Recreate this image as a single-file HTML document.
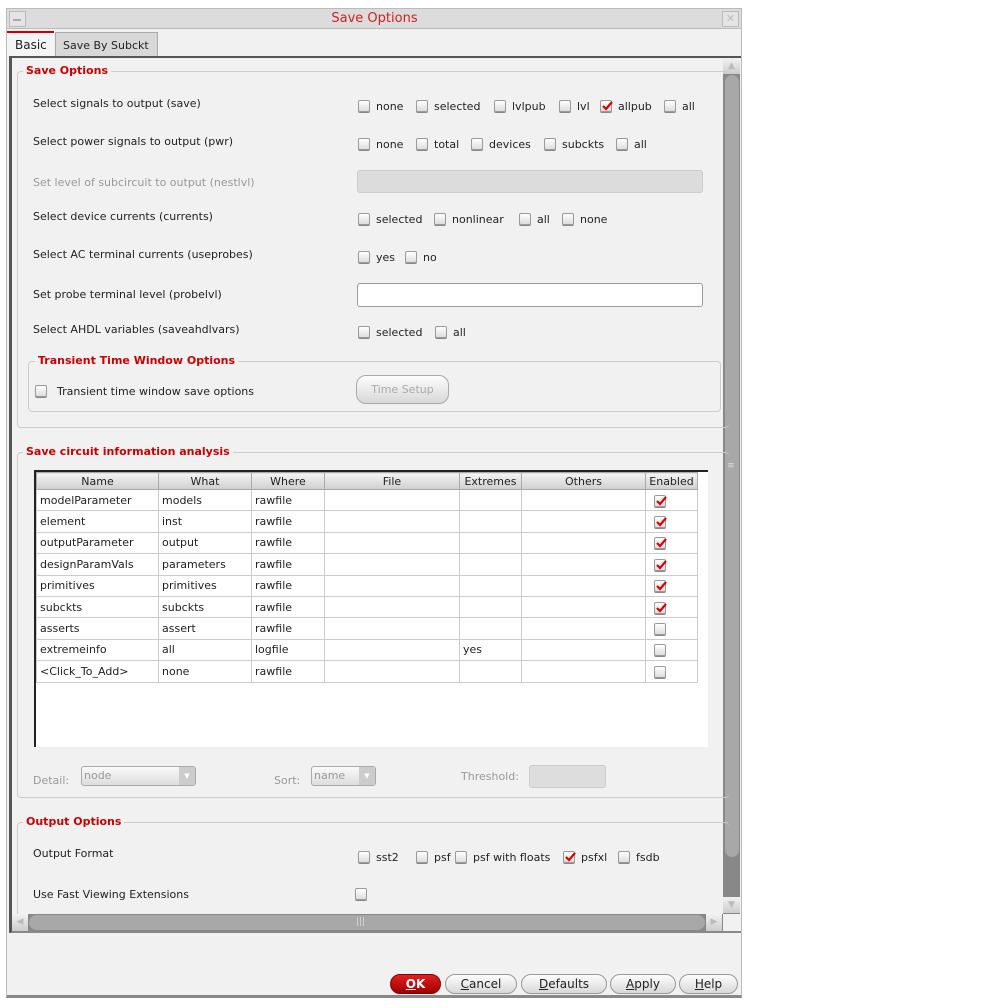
<!DOCTYPE html>
<html><head><meta charset="utf-8"><style>
*{margin:0;padding:0;box-sizing:border-box}
body{width:993px;height:1008px;background:#fff;position:relative;overflow:hidden;font-family:"DejaVu Sans","Liberation Sans",sans-serif;font-size:11px;color:#222}
.a{position:absolute}
.t{position:absolute;white-space:nowrap;line-height:13px}
.cb{position:absolute;width:12px;height:12px;border:1px solid #9a9a9a;border-radius:2px;background:linear-gradient(#fff,#ddd);box-shadow:0 1px 0 #888}
.cb svg{position:absolute;left:0;top:-1px}
.grp{position:absolute;border:1px solid #ccc;border-radius:4px}
.gt{position:absolute;background:#f1f1f1;padding:0 3px;color:#cc0000;font-weight:bold;line-height:13px}
.btn{position:absolute;height:20px;border:1px solid #999;border-radius:10px;background:linear-gradient(#fdfdfd,#d8d8d8);text-align:center;line-height:18px;font-size:12px;color:#222}
table{border-collapse:collapse;font-size:11px;table-layout:fixed}
td{border:1px solid #ccc;height:21.4px;padding:0 3px;white-space:nowrap;color:#222;overflow:hidden}
th{font-weight:normal;height:17px;border:1px solid #aaa;background:linear-gradient(#f4f4f4,#cfcfcf);color:#222}
td.en{padding-left:8px}
.dis{color:#999}
</style></head><body>
<div class="a" style="left:6px;top:8px;width:736px;height:990px;background:#f1f1f1;border:1px solid #bbb;border-bottom:3px solid #888"></div>
<div class="a" style="left:7px;top:9px;width:734px;height:20px;background:#dcdcdc;border-bottom:1px solid #bbb"></div>
<div class="a" style="left:9px;top:11px;width:17px;height:16px;border:1px solid #bbb;background:#e4e4e4"></div>
<div class="a" style="left:13px;top:19px;width:8px;height:2px;background:#aaa"></div>
<div class="a" style="left:722px;top:11px;width:17px;height:16px;border:1px solid #bbb;background:#e4e4e4;color:#bbb;font-size:11px;text-align:center;line-height:14px">✕</div>
<div class="t" style="left:0;width:749px;text-align:center;top:12px;color:#cc2222;font-size:13px">Save Options</div>
<div class="a" style="left:7px;top:31px;width:47px;height:26px;background:#f4f4f4;border-top:2px solid #cc0000"></div>
<div class="t" style="left:15px;top:39px;font-size:12px">Basic</div>
<div class="a" style="left:55px;top:32px;width:103px;height:24px;background:#d8d8d8;border:1px solid #aaa;border-bottom:none"></div>
<div class="t" style="left:63px;top:39px;font-size:11px">Save By Subckt</div>
<div class="a" style="left:9px;top:56px;width:732px;height:877px;border-top:2px solid #555;border-left:3px solid #555;border-bottom:1px solid #888"></div>
<div class="a" style="left:723px;top:58px;width:17px;height:856px;background:#888"></div>
<div class="a" style="left:723px;top:58px;width:17px;height:16px;background:linear-gradient(#f2f2f2,#ccc);color:#bbb;font-size:9px;text-align:center;line-height:16px">▲</div>
<div class="a" style="left:725px;top:75px;width:14px;height:782px;border-radius:7px;background:#a8a8a8"></div>
<div class="t" style="left:727px;top:460px;color:#ddd;font-size:9px">≡</div>
<div class="a" style="left:723px;top:897px;width:17px;height:16px;background:linear-gradient(#f2f2f2,#ccc);color:#bbb;font-size:9px;text-align:center;line-height:16px">▼</div>

<div class="grp" style="left:17px;top:71px;width:712px;height:357px;border-right:none"></div>
<div class="gt" style="left:23px;top:64px">Save Options</div>
<div class="t" style="left:33px;top:97px">Select signals to output (save)</div>
<div class="t" style="left:33px;top:135px">Select power signals to output (pwr)</div>
<div class="t dis" style="left:33px;top:176px">Set level of subcircuit to output (nestlvl)</div>
<div class="t" style="left:33px;top:210px">Select device currents (currents)</div>
<div class="t" style="left:33px;top:248px">Select AC terminal currents (useprobes)</div>
<div class="t" style="left:33px;top:288px">Set probe terminal level (probelvl)</div>
<div class="t" style="left:33px;top:323px">Select AHDL variables (saveahdlvars)</div>

<div class="cb" style="left:358px;top:100px"></div><div class="t" style="left:376px;top:100px">none</div>
<div class="cb" style="left:416px;top:100px"></div><div class="t" style="left:434px;top:100px">selected</div>
<div class="cb" style="left:494px;top:100px"></div><div class="t" style="left:512px;top:100px">lvlpub</div>
<div class="cb" style="left:559px;top:100px"></div><div class="t" style="left:577px;top:100px">lvl</div>
<div class="cb" style="left:600px;top:100px"><svg width="13" height="13"><path d="M2 6 L5 9 L11 2" fill="none" stroke="#d00" stroke-width="2.2"/></svg></div><div class="t" style="left:618px;top:100px">allpub</div>
<div class="cb" style="left:664px;top:100px"></div><div class="t" style="left:682px;top:100px">all</div>
<div class="cb" style="left:358px;top:138px"></div><div class="t" style="left:376px;top:138px">none</div>
<div class="cb" style="left:416px;top:138px"></div><div class="t" style="left:434px;top:138px">total</div>
<div class="cb" style="left:471px;top:138px"></div><div class="t" style="left:489px;top:138px">devices</div>
<div class="cb" style="left:544px;top:138px"></div><div class="t" style="left:562px;top:138px">subckts</div>
<div class="cb" style="left:616px;top:138px"></div><div class="t" style="left:634px;top:138px">all</div>
<div class="a" style="left:357px;top:170px;width:346px;height:23px;background:#dcdcdc;border:1px solid #ccc;border-radius:3px"></div>
<div class="cb" style="left:358px;top:213px"></div><div class="t" style="left:376px;top:213px">selected</div>
<div class="cb" style="left:434px;top:213px"></div><div class="t" style="left:452px;top:213px">nonlinear</div>
<div class="cb" style="left:519px;top:213px"></div><div class="t" style="left:537px;top:213px">all</div>
<div class="cb" style="left:562px;top:213px"></div><div class="t" style="left:580px;top:213px">none</div>
<div class="cb" style="left:358px;top:251px"></div><div class="t" style="left:376px;top:251px">yes</div>
<div class="cb" style="left:405px;top:251px"></div><div class="t" style="left:423px;top:251px">no</div>
<div class="a" style="left:357px;top:283px;width:346px;height:24px;background:#fff;border:1px solid #999;border-radius:3px"></div>
<div class="cb" style="left:358px;top:326px"></div><div class="t" style="left:376px;top:326px">selected</div>
<div class="cb" style="left:435px;top:326px"></div><div class="t" style="left:453px;top:326px">all</div>

<div class="grp" style="left:28px;top:361px;width:693px;height:51px"></div>
<div class="gt" style="left:35px;top:354px">Transient Time Window Options</div>
<div class="cb" style="left:35px;top:385px"></div>
<div class="t" style="left:57px;top:385px">Transient time window save options</div>
<div class="btn" style="left:356px;top:375px;width:93px;height:29px;line-height:27px;color:#aaa;font-size:11px;border-color:#aaa">Time Setup</div>

<div class="grp" style="left:17px;top:452px;width:712px;height:346px;border-right:none"></div>
<div class="gt" style="left:23px;top:445px">Save circuit information analysis</div>
<div class="a" style="left:34px;top:470px;width:674px;height:277px;background:#fff;border-left:2px solid #222;border-top:2px solid #222"></div>
<table class="a" style="left:36px;top:472px;width:662px">
<tr><th style="width:122px">Name</th><th style="width:93px">What</th><th style="width:73px">Where</th><th style="width:135px">File</th><th style="width:62px">Extremes</th><th style="width:124px">Others</th><th>Enabled</th></tr>
<tr><td>modelParameter</td><td>models</td><td>rawfile</td><td></td><td></td><td></td><td class="en"><span class="cb" style="position:relative;display:inline-block;top:2px"><svg width="13" height="13"><path d="M2 6 L5 9 L11 2" fill="none" stroke="#d00" stroke-width="2.2"/></svg></span></td></tr>
<tr><td>element</td><td>inst</td><td>rawfile</td><td></td><td></td><td></td><td class="en"><span class="cb" style="position:relative;display:inline-block;top:2px"><svg width="13" height="13"><path d="M2 6 L5 9 L11 2" fill="none" stroke="#d00" stroke-width="2.2"/></svg></span></td></tr>
<tr><td>outputParameter</td><td>output</td><td>rawfile</td><td></td><td></td><td></td><td class="en"><span class="cb" style="position:relative;display:inline-block;top:2px"><svg width="13" height="13"><path d="M2 6 L5 9 L11 2" fill="none" stroke="#d00" stroke-width="2.2"/></svg></span></td></tr>
<tr><td>designParamVals</td><td>parameters</td><td>rawfile</td><td></td><td></td><td></td><td class="en"><span class="cb" style="position:relative;display:inline-block;top:2px"><svg width="13" height="13"><path d="M2 6 L5 9 L11 2" fill="none" stroke="#d00" stroke-width="2.2"/></svg></span></td></tr>
<tr><td>primitives</td><td>primitives</td><td>rawfile</td><td></td><td></td><td></td><td class="en"><span class="cb" style="position:relative;display:inline-block;top:2px"><svg width="13" height="13"><path d="M2 6 L5 9 L11 2" fill="none" stroke="#d00" stroke-width="2.2"/></svg></span></td></tr>
<tr><td>subckts</td><td>subckts</td><td>rawfile</td><td></td><td></td><td></td><td class="en"><span class="cb" style="position:relative;display:inline-block;top:2px"><svg width="13" height="13"><path d="M2 6 L5 9 L11 2" fill="none" stroke="#d00" stroke-width="2.2"/></svg></span></td></tr>
<tr><td>asserts</td><td>assert</td><td>rawfile</td><td></td><td></td><td></td><td class="en"><span class="cb" style="position:relative;display:inline-block;top:2px"></span></td></tr>
<tr><td>extremeinfo</td><td>all</td><td>logfile</td><td></td><td>yes</td><td></td><td class="en"><span class="cb" style="position:relative;display:inline-block;top:2px"></span></td></tr>
<tr><td>&lt;Click_To_Add&gt;</td><td>none</td><td>rawfile</td><td></td><td></td><td></td><td class="en"><span class="cb" style="position:relative;display:inline-block;top:2px"></span></td></tr>
</table>
<div class="t dis" style="left:33px;top:774px">Detail:</div>
<div class="a" style="left:81px;top:766px;width:115px;height:20px;border:1px solid #aaa;border-radius:3px;background:linear-gradient(#fafafa,#ddd)"></div>
<div class="t dis" style="left:84px;top:769px">node</div>
<div class="a" style="left:179px;top:767px;width:16px;height:18px;background:#ccc;color:#fff;font-size:7px;text-align:center;line-height:18px">▼</div>
<div class="t dis" style="left:274px;top:774px">Sort:</div>
<div class="a" style="left:311px;top:766px;width:65px;height:20px;border:1px solid #aaa;border-radius:3px;background:linear-gradient(#fafafa,#ddd)"></div>
<div class="t dis" style="left:314px;top:769px">name</div>
<div class="a" style="left:359px;top:767px;width:16px;height:18px;background:#ccc;color:#fff;font-size:7px;text-align:center;line-height:18px">▼</div>
<div class="t dis" style="left:461px;top:770px">Threshold:</div>
<div class="a" style="left:529px;top:765px;width:77px;height:23px;background:#ddd;border:1px solid #ccc;border-radius:3px"></div>

<div class="grp" style="left:17px;top:822px;width:712px;height:100px;border-right:none;border-bottom:none"></div>
<div class="gt" style="left:23px;top:815px">Output Options</div>
<div class="t" style="left:33px;top:847px">Output Format</div>
<div class="t" style="left:33px;top:888px">Use Fast Viewing Extensions</div>
<div class="cb" style="left:358px;top:851px"></div><div class="t" style="left:376px;top:851px">sst2</div>
<div class="cb" style="left:416px;top:851px"></div><div class="t" style="left:427px;top:851px;left:434px">psf</div>
<div class="cb" style="left:455px;top:851px"></div><div class="t" style="left:473px;top:851px">psf with floats</div>
<div class="cb" style="left:563px;top:851px"><svg width="13" height="13"><path d="M2 6 L5 9 L11 2" fill="none" stroke="#d00" stroke-width="2.2"/></svg></div><div class="t" style="left:581px;top:851px">psfxl</div>
<div class="cb" style="left:618px;top:851px"></div><div class="t" style="left:636px;top:851px">fsdb</div>
<div class="cb" style="left:355px;top:888px"></div>

<div class="a" style="left:12px;top:914px;width:711px;height:18px;background:#888"></div>
<div class="a" style="left:12px;top:914px;width:16px;height:17px;background:linear-gradient(#f2f2f2,#ccc);color:#bbb;font-size:9px;text-align:center;line-height:17px">◀</div>
<div class="a" style="left:29px;top:915px;width:676px;height:15px;border-radius:8px;background:#a8a8a8"></div>
<div class="t" style="left:356px;top:916px;color:#ddd;font-size:9px">|||</div>
<div class="a" style="left:706px;top:914px;width:16px;height:17px;background:linear-gradient(#f2f2f2,#ccc);color:#bbb;font-size:9px;text-align:center;line-height:17px">▶</div>
<div class="a" style="left:12px;top:931px;width:729px;height:1px;background:#888"></div>

<div class="btn" style="left:390px;top:974px;width:51px;background:linear-gradient(#e02020,#a00000);border-color:#800;color:#fff;font-weight:bold"><u>O</u>K</div>
<div class="btn" style="left:445px;top:974px;width:72px"><u>C</u>ancel</div>
<div class="btn" style="left:521px;top:974px;width:86px"><u>D</u>efaults</div>
<div class="btn" style="left:610px;top:974px;width:66px"><u>A</u>pply</div>
<div class="btn" style="left:679px;top:974px;width:59px"><u>H</u>elp</div>
</body></html>
